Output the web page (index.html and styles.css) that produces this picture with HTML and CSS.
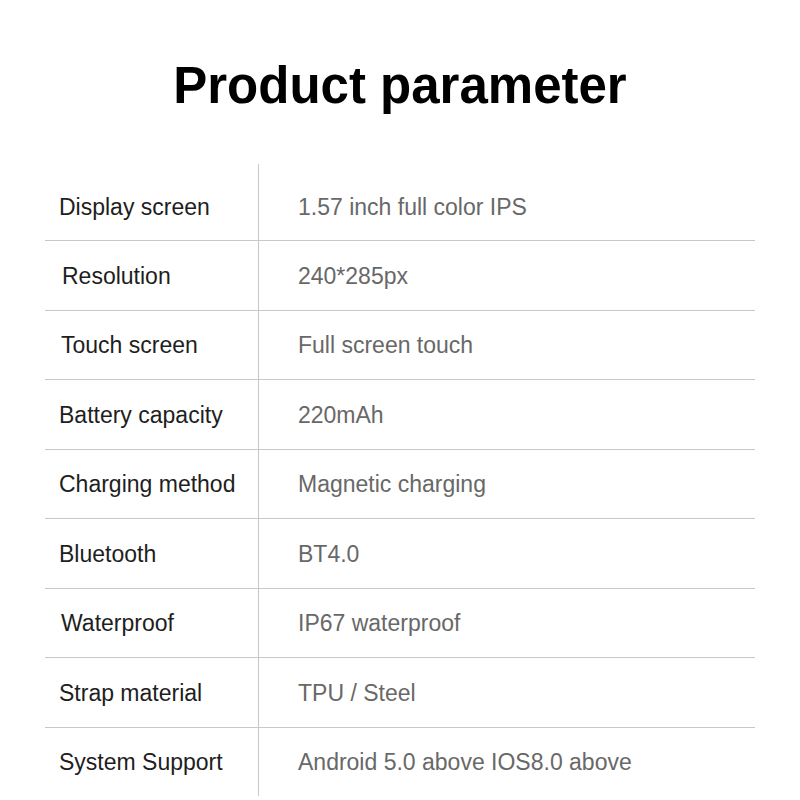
FILE: index.html
```html
<!DOCTYPE html>
<html>
<head>
<meta charset="utf-8">
<link rel="stylesheet" href="styles.css">
</head>
<body>
<div class="page">
  <h1 class="title">Product parameter</h1>
  <div class="table">
    <div class="row first"><div class="label">Display screen</div><div class="value">1.57 inch full color IPS</div></div>
    <div class="row"><div class="label shift3">Resolution</div><div class="value">240*285px</div></div>
    <div class="row"><div class="label shift2">Touch screen</div><div class="value">Full screen touch</div></div>
    <div class="row"><div class="label">Battery capacity</div><div class="value">220mAh</div></div>
    <div class="row"><div class="label">Charging method</div><div class="value">Magnetic charging</div></div>
    <div class="row"><div class="label">Bluetooth</div><div class="value">BT4.0</div></div>
    <div class="row"><div class="label shift2">Waterproof</div><div class="value">IP67 waterproof</div></div>
    <div class="row"><div class="label">Strap material</div><div class="value">TPU / Steel</div></div>
    <div class="row last"><div class="label">System Support</div><div class="value">Android 5.0 above IOS8.0 above</div></div>
  </div>
</div>
</body>
</html>
```

FILE: styles.css
```css
html, body {
  margin: 0;
  padding: 0;
  background: #ffffff;
}
.page {
  width: 800px;
  height: 800px;
  padding-top: 56px;
  box-sizing: border-box;
  font-family: "Liberation Sans", Arial, sans-serif;
}
.title {
  margin: 0;
  font-size: 51px;
  line-height: 60px;
  font-weight: bold;
  color: #000;
  text-align: center;
}
.table {
  margin: 48px 0 0 45px;
  width: 710px;
}
.row {
  display: grid;
  grid-template-columns: 213px 497px;
  height: 69.5px;
  box-sizing: border-box;
  border-bottom: 1px solid #c8c8c8;
}
.row.first {
  height: 77px;
}
.row.first .label,
.row.first .value {
  padding-top: 10px;
}
.row.last {
  height: 68px;
  border-bottom: none;
}
.label,
.value {
  display: flex;
  align-items: center;
  padding-top: 2px;
  font-size: 23px;
}
.label {
  padding-left: 14px;
  color: #1e1e1e;
}
.label.shift2 { padding-left: 16px; }
.label.shift3 { padding-left: 17px; }
.value {
  border-left: 1px solid #c8c8c8;
  padding-left: 39px;
  color: #686868;
}
```
